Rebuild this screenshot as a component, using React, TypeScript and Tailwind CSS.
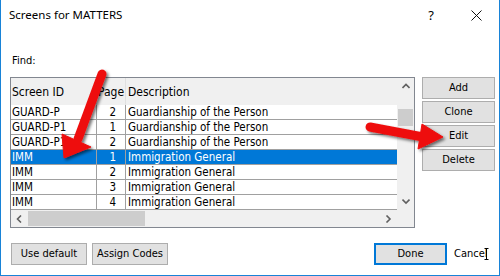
import React from 'react'

const rows = [
  { id: 'GUARD-P', page: 2, desc: 'Guardianship of the Person' },
  { id: 'GUARD-P1', page: 1, desc: 'Guardianship of the Person' },
  { id: 'GUARD-P1', page: 2, desc: 'Guardianship of the Person' },
  { id: 'IMM', page: 1, desc: 'Immigration General', selected: true },
  { id: 'IMM', page: 2, desc: 'Immigration General' },
  { id: 'IMM', page: 3, desc: 'Immigration General' },
  { id: 'IMM', page: 4, desc: 'Immigration General' },
]

const Chevron = ({ dir }: { dir: 'up' | 'down' | 'left' | 'right' }) => {
  const pts = {
    up: '0.5,5 4,1.5 7.5,5',
    down: '0.5,1.5 4,5 7.5,1.5',
    left: '5,0.5 1.5,4 5,7.5',
    right: '1.5,0.5 5,4 1.5,7.5',
  }[dir]
  const horiz = dir === 'left' || dir === 'right'
  return (
    <svg width={horiz ? 7 : 8} height={horiz ? 8 : 7} viewBox={horiz ? '0 0 7 8' : '0 0 8 7'}>
      <polyline points={pts} fill="none" stroke="#606060" strokeWidth="1.6" />
    </svg>
  )
}

const WinButton = ({ label, className = '' }: { label: string; className?: string }) => (
  <div
    className={`flex items-center justify-center h-[22px] bg-[#e1e1e1] border border-[#adadad] text-[11px] text-black ${className}`}
  >
    {label}
  </div>
)

// red callout arrows drawn over the dialog
const Arrows = () => (
  <svg className="absolute inset-0 pointer-events-none" width="500" height="276" viewBox="0 0 500 276">
    <defs>
      <filter id="shadow" x="-20%" y="-20%" width="140%" height="140%">
        <feDropShadow dx="2" dy="2" stdDeviation="1.5" floodColor="#000" floodOpacity="0.55" />
      </filter>
    </defs>
    <g filter="url(#shadow)" fill="#ee1111" stroke="#ee1111">
      <line x1="101" y1="74" x2="77" y2="139" strokeWidth="9" strokeLinecap="round" />
      <polygon points="61,134 90,147 63,158" strokeWidth="1" strokeLinejoin="round" />
      <line x1="369" y1="127" x2="422" y2="137" strokeWidth="9" strokeLinecap="round" />
      <polygon points="421,124 417,149 442,137" strokeWidth="1" strokeLinejoin="round" />
    </g>
  </svg>
)

export default function App() {
  return (
    <div className="relative w-[500px] h-[276px] bg-white border-x border-b border-[#1883d7] flex flex-col overflow-hidden font-['Tahoma','DejaVu_Sans_Condensed','DejaVu_Sans',sans-serif] text-black">
      {/* title bar */}
      <div className="h-[30px] flex items-center pl-[8px] pr-[17px]">
        <span className="font-['Segoe_UI','Noto_Sans',sans-serif] text-[11.5px]">Screens for MATTERS</span>
        <span className="ml-auto font-['Segoe_UI','Noto_Sans',sans-serif] text-[13px] leading-none">?</span>
        <svg className="ml-[37px]" width="11" height="11" viewBox="0 0 11 11">
          <path d="M0.5 0.5 L10.5 10.5 M10.5 0.5 L0.5 10.5" stroke="#111" strokeWidth="1" />
        </svg>
      </div>

      <div className="h-[47px] pl-[11px] pt-[24px] text-[11px] leading-[13px]">Find:</div>

      <div className="flex pl-[9px] gap-[7px]">
        {/* list */}
        <div className="w-[405px] h-[151px] border border-[#828790] flex flex-col">
          <div className="flex h-[132px]">
            <div className="flex-1 flex flex-col text-[11.5px]">
              <div className="flex h-[27px] bg-[#f0f0f0] items-center text-[12px]">
                <div className="w-[86px] h-full flex items-center pl-[1px] border-r border-[#e0e0e0]">Screen ID</div>
                <div className="w-[29px] h-full flex items-center pl-[1px] border-r border-[#e0e0e0]">Page</div>
                <div className="flex-1 h-full flex items-center pl-[2px]">Description</div>
              </div>
              {rows.map((r, i) => (
                <div
                  key={i}
                  className={`flex h-[15px] leading-[14px] border-b border-[#a0a0a0] ${
                    r.selected ? 'bg-[#0078d7] text-white' : 'bg-white'
                  }`}
                >
                  <div className="w-[86px] pl-[1px] border-r border-[#a0a0a0] whitespace-nowrap overflow-hidden">{r.id}</div>
                  <div className="w-[29px] pr-[9px] text-right border-r border-[#a0a0a0]">{r.page}</div>
                  <div className="flex-1 pl-[2px] whitespace-nowrap">{r.desc}</div>
                </div>
              ))}
            </div>
            {/* vertical scrollbar */}
            <div className="w-[17px] bg-[#f0f0f0] flex flex-col">
              <div className="h-[17px] flex items-center justify-center">
                <Chevron dir="up" />
              </div>
              <div className="mt-[14px] h-[17px] mx-[1px] bg-[#cdcdcd]" />
              <div className="flex-1" />
              <div className="h-[17px] flex items-center justify-center">
                <Chevron dir="down" />
              </div>
            </div>
          </div>
          {/* horizontal scrollbar */}
          <div className="h-[17px] flex bg-[#f0f0f0]">
            <div className="w-[17px] flex items-center justify-center">
              <Chevron dir="left" />
            </div>
            <div className="w-[117px] my-[1px] bg-[#cdcdcd]" />
            <div className="flex-1" />
            <div className="w-[17px] flex items-center justify-center">
              <Chevron dir="right" />
            </div>
            <div className="w-[17px]" />
          </div>
        </div>

        {/* side buttons */}
        <div className="w-[73px] flex flex-col gap-[2px]">
          <WinButton label="Add" />
          <WinButton label="Clone" />
          <WinButton label="Edit" />
          <WinButton label="Delete" />
        </div>
      </div>

      {/* bottom buttons */}
      <div className="mt-[15px] flex items-center pl-[10px] pr-[13px]">
        <WinButton label="Use default" className="w-[76px]" />
        <WinButton label="Assign Codes" className="w-[76px] ml-[5px]" />
        <div className="ml-auto w-[73px] h-[22px] flex items-center justify-center bg-[#e1e1e1] border-2 border-[#0078d7] text-[11px]">
          Done
        </div>
        <div className="relative ml-[7px] w-[32px] text-[11px] leading-[22px]">
          Cancel
          <svg className="absolute left-[30px] top-[5px]" width="5" height="12" viewBox="0 0 5 12">
            <path d="M2.5 0.5 V11.5 M0.5 11.5 H4.5 M0.5 0.5 H4.5" stroke="#000" strokeWidth="1" />
          </svg>
        </div>
      </div>

      <Arrows />
    </div>
  )
}
